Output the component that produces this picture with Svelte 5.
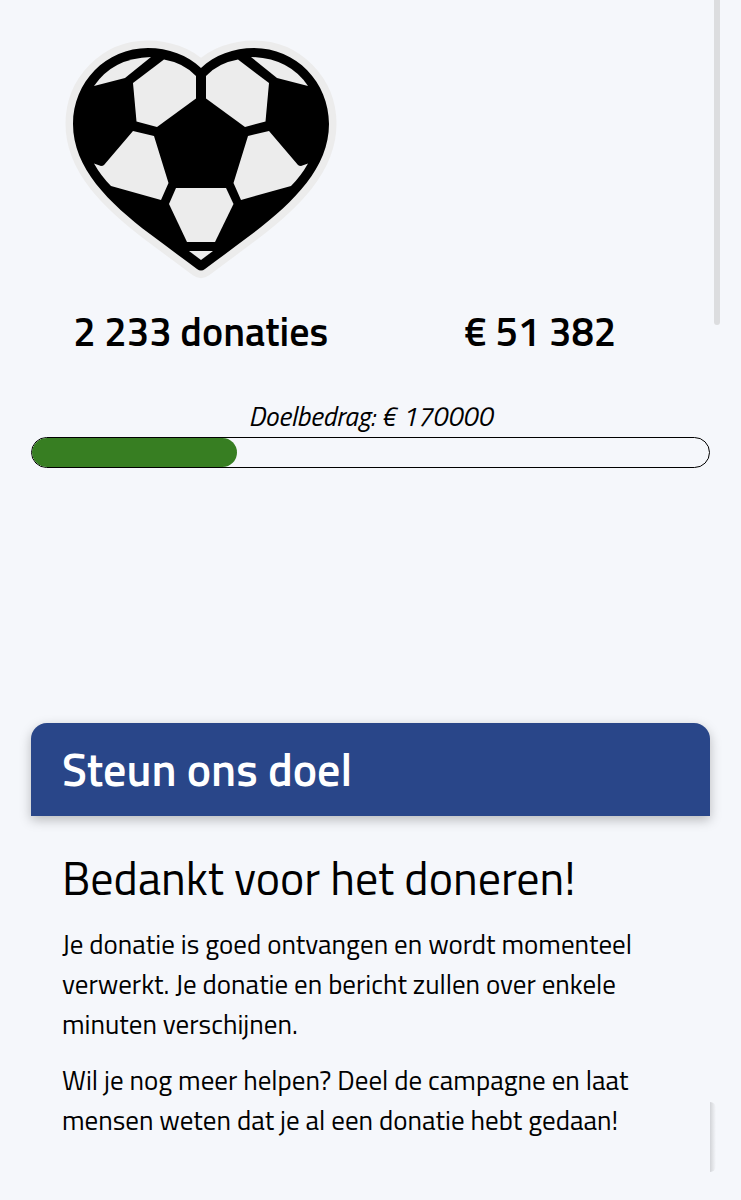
<script>
  let donations = 2233;
  let raised = 51382;
  let goal = 170000;

  $: percentage = (raised / goal) * 100;

  function formatNumber(value) {
    return value.toString().replace(/\B(?=(\d{3})+$)/g, ' ');
  }
</script>

<div class="scroll-thumb"></div>

<main class="campaign">
  <section class="stats">
    <div class="stat">
      <svg class="logo" viewBox="60 36 282 246" role="img" aria-label="Voetbalhart">
        <defs>
          <path
            id="heart"
            d="M201 68 C188 55 168 48 148 48 C106 48 73 82 73 124 C73 168 109 203 150 234 C166 246 182 258 197 269 Q201 272 205 269 C220 258 236 246 252 234 C293 203 329 168 329 124 C329 82 296 48 254 48 C234 48 214 55 201 68 Z"
          />
          <g id="half">
            <path d="M94 86 Q113 58 151 57 L125 78 Z" />
            <path d="M133 83 L164 59.5 Q184 63 196 76 V98.5 L157 127 L136.5 121.5 Z" />
            <path d="M133 131 L154 136 L168.500 183 L161 200 L111 186 Q101 176 94 163.500 L101 166 Q103 166 104 165 Z" />
          </g>
        </defs>
        <use href="#heart" fill="#ececec" stroke="#ececec" stroke-width="15" stroke-linejoin="round" />
        <use href="#heart" />
        <g fill="#ececec">
          <use href="#half" />
          <use href="#half" transform="translate(402 0) scale(-1 1)" />
          <path d="M176 188 H226 L233.500 204 L215 242 H187 L169 204 Z" />
          <path d="M189 251 H213 L201 260 Z" />
        </g>
      </svg>
    </div>
    <div class="stat total">{formatNumber(donations)} donaties</div>
    <div class="stat total">€ {formatNumber(raised)}</div>
  </section>

  <section class="goal">
    <p id="goal-label">Doelbedrag: € {goal}</p>
    <div
      class="bar"
      role="progressbar"
      aria-labelledby="goal-label"
      aria-valuemin="0"
      aria-valuemax={goal}
      aria-valuenow={raised}
    >
      <div class="bar-fill" style="width: {percentage}%"></div>
    </div>
  </section>

  <section class="card">
    <header class="card-header">
      <h2>Steun ons doel</h2>
    </header>
    <div class="card-body">
      <h3>Bedankt voor het doneren!</h3>
      <p>
        Je donatie is goed ontvangen en wordt momenteel verwerkt. Je donatie en bericht zullen over
        enkele minuten verschijnen.
      </p>
      <p>Wil je nog meer helpen? Deel de campagne en laat mensen weten dat je al een donatie hebt gedaan!</p>
    </div>
  </section>
</main>

<style>
  :global(body) {
    margin: 0;
    background-color: #f5f7fb;
    color: #000;
    font-family: 'Titillium Web', 'Open Sans', sans-serif;
  }

  .scroll-thumb {
    position: absolute;
    top: 0;
    right: 21px;
    width: 6px;
    height: 325px;
    border-radius: 0 0 3px 3px;
    background-color: #dcdddf;
  }

  .campaign {
    padding: 36px 31px 0;
  }

  .stats {
    display: grid;
    grid-template-columns: 1fr 1fr;
    row-gap: 20px;
  }

  .stat {
    text-align: center;
  }

  .stat:nth-child(2) {
    grid-column: 1;
  }

  .logo {
    display: block;
    width: 282px;
    height: 246px;
    margin: 0 auto;
  }

  .total {
    font-size: 40px;
    line-height: 60px;
    font-weight: 600;
    white-space: nowrap;
  }

  .goal {
    padding-top: 34px;
  }

  .goal p {
    margin: 0 0 1px;
    font-size: 27px;
    line-height: 40px;
    font-style: italic;
    font-weight: 400;
    text-align: center;
  }

  .bar {
    box-sizing: border-box;
    height: 31px;
    border: 1px solid #000;
    border-radius: 16px;
    overflow: hidden;
  }

  .bar-fill {
    height: 100%;
    border-radius: 16px;
    background-color: #377e22;
  }

  .card {
    margin-top: 255px;
  }

  .card-header {
    padding: 16px 31px 17px;
    border-radius: 16px 16px 0 0;
    background-color: #294689;
    color: #fff;
    box-shadow: 0 4px 12px rgba(0, 0, 0, 0.25);
  }

  h2 {
    margin: 0;
    font-size: 46px;
    line-height: 60px;
    font-weight: 600;
  }

  .card-body {
    position: relative;
    padding: 32px 31px 40px;
  }

  /* edge of the card's shadow */
  .card-body::after {
    content: '';
    position: absolute;
    right: -6px;
    bottom: 24px;
    width: 6px;
    height: 70px;
    background: linear-gradient(to right, rgba(0, 0, 0, 0.14), transparent);
    border-radius: 0 6px 6px 0;
  }

  h3 {
    margin: 0 0 16px;
    font-size: 46px;
    line-height: 60px;
    font-weight: 400;
  }

  .card-body p {
    margin: 0 0 16px;
    font-size: 27px;
    line-height: 40px;
    font-weight: 400;
  }
</style>
